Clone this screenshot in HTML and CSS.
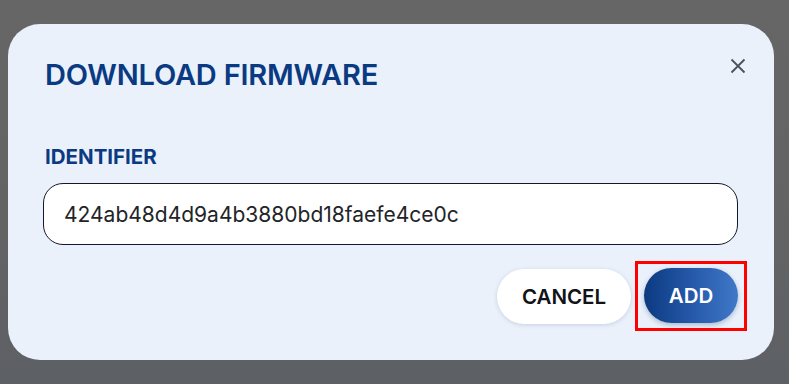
FILE: index.html
```html
<!DOCTYPE html>
<html lang="en">
<head>
<meta charset="utf-8">
<title>Download firmware</title>
<link rel="stylesheet" href="styles.css">
</head>
<body>
<div class="backdrop">
  <div class="dialog" role="dialog" aria-labelledby="dlg-title">
    <div class="dialog-header">
      <h2 id="dlg-title" class="dialog-title">DOWNLOAD FIRMWARE</h2>
      <button class="close-btn" aria-label="Close">
        <svg width="16" height="16" viewBox="0 0 16 16"><path d="M1.5 1.5 L14.5 14.5 M14.5 1.5 L1.5 14.5" stroke="#4a505e" stroke-width="1.8" fill="none"/></svg>
      </button>
    </div>
    <label class="field-label" for="ident">IDENTIFIER</label>
    <div class="field-box">
      <input id="ident" class="field-input" type="text" value="424ab48d4d9a4b3880bd18faefe4ce0c">
    </div>
    <div class="actions">
      <button class="btn btn-cancel">CANCEL</button>
      <div class="focus-ring">
        <button class="btn btn-add">ADD</button>
      </div>
    </div>
  </div>
</div>
</body>
</html>
```
FILE: styles.css
```css
html, body {
  margin: 0;
  padding: 0;
  height: 100%;
}
body {
  background: linear-gradient(180deg, #666666 0%, #636364 60%, #5d6065 100%);
  font-family: Inter, "Noto Sans", sans-serif;
}
.backdrop {
  padding: 24px 15px 24px 8px;
  box-sizing: border-box;
  height: 384px;
}
.dialog {
  background: #eaf1fb;
  border-radius: 32px;
  height: 336px;
  box-sizing: border-box;
  padding: 33px 36px 0 35px;
  display: flex;
  flex-direction: column;
}
.dialog-header {
  display: flex;
  align-items: flex-start;
  justify-content: space-between;
}
.dialog-title {
  margin: 0;
  font-size: 29px;
  line-height: 36px;
  font-weight: 600;
  color: #0a3a82;
  letter-spacing: -0.2px;
  padding-left: 2px;
}
.close-btn {
  background: none;
  border: 0;
  padding: 0;
  margin: -3px -12px 0 0;
  width: 24px;
  height: 24px;
  display: flex;
  align-items: center;
  justify-content: center;
  cursor: pointer;
}
.field-label {
  margin-top: 52px;
  font-size: 20.5px;
  line-height: 24px;
  font-weight: 700;
  color: #0a3a82;
  padding-left: 2px;
}
.field-box {
  margin-top: 14px;
  height: 62px;
  box-sizing: border-box;
  border: 1px solid #14182a;
  border-radius: 20px;
  background: #ffffff;
  display: flex;
  align-items: center;
  padding: 0 20px;
}
.field-input {
  border: 0;
  outline: 0;
  width: 100%;
  font-family: Inter, "Noto Sans", sans-serif;
  font-size: 21px;
  color: #222428;
  background: transparent;
  padding: 0;
}
.actions {
  margin-top: 16px;
  display: flex;
  justify-content: flex-end;
  align-items: center;
  gap: 4px;
  margin-right: -9px;
}
.btn {
  border: 0;
  border-radius: 28px;
  height: 55px;
  font-family: Inter, "Noto Sans", sans-serif;
  font-size: 20.5px;
  font-weight: 600;
  cursor: pointer;
}
.btn-cancel {
  width: 134px;
  background: #ffffff;
  color: #111318;
  box-shadow: 0 1px 4px rgba(40, 60, 100, 0.18);
}
.focus-ring {
  border: 3px solid #ff0000;
  padding: 4px 6px 5px 6px;
}
.btn-add {
  display: block;
  width: 94px;
  color: #ffffff;
  background: linear-gradient(90deg, #0b3a80 0%, #2558a8 50%, #4078c8 100%);
  box-shadow: 0 2px 5px rgba(20, 50, 110, 0.3);
}
```
